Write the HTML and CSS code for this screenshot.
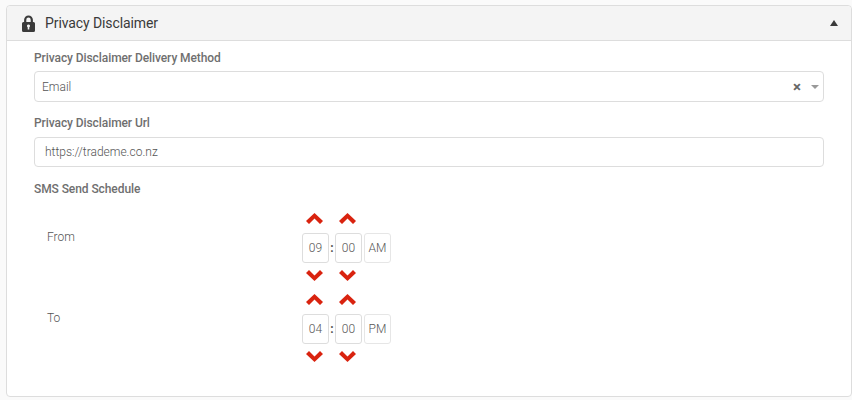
FILE: index.html
```html
<!DOCTYPE html>
<html lang="en">
<head>
    <meta charset="UTF-8">
    <meta name="viewport" content="width=device-width, initial-scale=1.0">
    <title>Privacy Disclaimer</title>
    <link rel="stylesheet" href="styles.css">
</head>
<body>
    <section class="panel">
        <header class="panel-header">
            <svg class="lock-icon" width="13" height="17" viewBox="0 0 13 17">
                <path d="M3.200 8V4.800a3.300 3.300 0 0 1 6.600 0V8" fill="none" stroke="#3a3a3a" stroke-width="2.200"/>
                <path fill="#3a3a3a" fill-rule="evenodd" d="M1.500 7h10A1.500 1.500 0 0 1 13 8.500v7a1.500 1.500 0 0 1-1.500 1.500h-10A1.500 1.500 0 0 1 0 15.500v-7A1.500 1.500 0 0 1 1.500 7zM6.500 9.500a1.500 1.500 0 0 0-.8 2.800V14.500h1.600V12.300A1.500 1.500 0 0 0 6.500 9.500z"/>
            </svg>
            <h2>Privacy Disclaimer</h2>
            <span class="caret-up"></span>
        </header>
        <div class="panel-body">
            <label class="field-label">Privacy Disclaimer Delivery Method</label>
            <div class="select-box">
                <span class="select-value">Email</span>
                <span class="select-clear">×</span>
                <span class="select-arrow"></span>
            </div>

            <label class="field-label url-label">Privacy Disclaimer Url</label>
            <div class="text-input">https://trademe.co.nz</div>

            <label class="field-label sms-label">SMS Send Schedule</label>

            <div class="schedule-row first-row">
                <span class="schedule-name">From</span>
                <div class="time-picker">
                    <div class="spin-row spin-up">
                        <svg class="chev" width="17" height="11" viewBox="0 0 17 11"><path fill="#d9230f" d="M8.500 0L17 8l-3 3-5.500-5.500L3 11 0 8z"/></svg>
                        <svg class="chev" width="17" height="11" viewBox="0 0 17 11"><path fill="#d9230f" d="M8.500 0L17 8l-3 3-5.500-5.500L3 11 0 8z"/></svg>
                    </div>
                    <div class="time-row">
                        <span class="time-box">09</span>
                        <span class="colon">:</span>
                        <span class="time-box">00</span>
                        <span class="time-box ampm">AM</span>
                    </div>
                    <div class="spin-row spin-down">
                        <svg class="chev" width="17" height="11" viewBox="0 0 17 11"><path fill="#d9230f" d="M8.500 11L17 3l-3-3-5.500 5.500L3 0 0 3z"/></svg>
                        <svg class="chev" width="17" height="11" viewBox="0 0 17 11"><path fill="#d9230f" d="M8.500 11L17 3l-3-3-5.500 5.500L3 0 0 3z"/></svg>
                    </div>
                </div>
            </div>

            <div class="schedule-row">
                <span class="schedule-name">To</span>
                <div class="time-picker">
                    <div class="spin-row spin-up">
                        <svg class="chev" width="17" height="11" viewBox="0 0 17 11"><path fill="#d9230f" d="M8.500 0L17 8l-3 3-5.500-5.500L3 11 0 8z"/></svg>
                        <svg class="chev" width="17" height="11" viewBox="0 0 17 11"><path fill="#d9230f" d="M8.500 0L17 8l-3 3-5.500-5.500L3 11 0 8z"/></svg>
                    </div>
                    <div class="time-row">
                        <span class="time-box">04</span>
                        <span class="colon">:</span>
                        <span class="time-box">00</span>
                        <span class="time-box ampm">PM</span>
                    </div>
                    <div class="spin-row spin-down">
                        <svg class="chev" width="17" height="11" viewBox="0 0 17 11"><path fill="#d9230f" d="M8.500 11L17 3l-3-3-5.500 5.500L3 0 0 3z"/></svg>
                        <svg class="chev" width="17" height="11" viewBox="0 0 17 11"><path fill="#d9230f" d="M8.500 11L17 3l-3-3-5.500 5.500L3 0 0 3z"/></svg>
                    </div>
                </div>
            </div>
        </div>
    </section>
</body>
</html>
```

FILE: styles.css
```css
/* Global Styles */
body {
    font-family: Roboto, sans-serif;
    font-size: 12px;
    font-weight: 300;
    margin: 0;
    padding: 5px 0 0 6px;
    background-color: #fafafa;
    color: #555;
    overflow: hidden;
}

/* Panel */
.panel {
    width: 846px;
    height: 392px;
    box-sizing: border-box;
    background: #fff;
    border: 1px solid #ddd;
    border-radius: 4px;
}

.panel-header {
    display: flex;
    align-items: center;
    height: 34px;
    padding: 0 13px 0 15px;
    background-color: #f4f4f4;
    border-bottom: 1px solid #ddd;
    border-radius: 4px 4px 0 0;
}

.panel-header h2 {
    margin: 0 0 0 10px;
    font-size: 14px;
    font-weight: 400;
    letter-spacing: -0.1px;
    color: #3a3a3a;
}

.lock-icon {
    flex: none;
}

.caret-up {
    margin-left: auto;
    border-left: 4.500px solid transparent;
    border-right: 4.500px solid transparent;
    border-bottom: 6px solid #3a3a3a;
}

/* Form */
.panel-body {
    padding: 9px 27px 0;
}

.field-label {
    display: block;
    font-weight: 500;
    line-height: 16px;
    letter-spacing: -0.08px;
    color: #6f6f6f;
}

.select-box,
.text-input {
    display: flex;
    align-items: center;
    box-sizing: border-box;
    width: 790px;
    background: #fff;
    border: 1px solid #ddd;
    border-radius: 4px;
}

.select-box {
    height: 31px;
    margin-top: 5px;
    padding: 0 4px 0 7px;
}

.select-value {
    flex: 1;
}

.select-clear {
    font-size: 15px;
    font-weight: 700;
    color: #666;
    margin-right: 10px;
}

.select-arrow {
    border-left: 4px solid transparent;
    border-right: 4px solid transparent;
    border-top: 4px solid #999;
}

.url-label {
    margin-top: 13px;
}

.text-input {
    height: 30px;
    margin-top: 6px;
    padding: 0 10px;
}

.sms-label {
    margin-top: 14px;
}

/* Schedule */
.schedule-row {
    display: flex;
    align-items: flex-start;
    padding-left: 13px;
}

.first-row {
    margin-top: 9px;
}

.schedule-name {
    width: 255px;
    flex: none;
    margin-top: 24px;
    line-height: 14px;
}

.time-box {
    display: flex;
    align-items: center;
    justify-content: center;
    box-sizing: border-box;
    width: 27px;
    height: 30px;
    border: 1px solid #ddd;
    border-radius: 3px;
}

.ampm {
    margin-left: 2px;
    border-color: #e6e6e6;
}

.time-row {
    display: flex;
    align-items: center;
    height: 30px;
}

.colon {
    width: 6px;
    text-align: center;
    font-weight: 700;
}

.spin-row {
    display: flex;
    gap: 16px;
    align-items: center;
    padding-left: 4px;
}

.spin-up {
    height: 24px;
    padding-bottom: 3px;
}

.spin-down {
    height: 24px;
}

.chev {
    flex: none;
}
```
